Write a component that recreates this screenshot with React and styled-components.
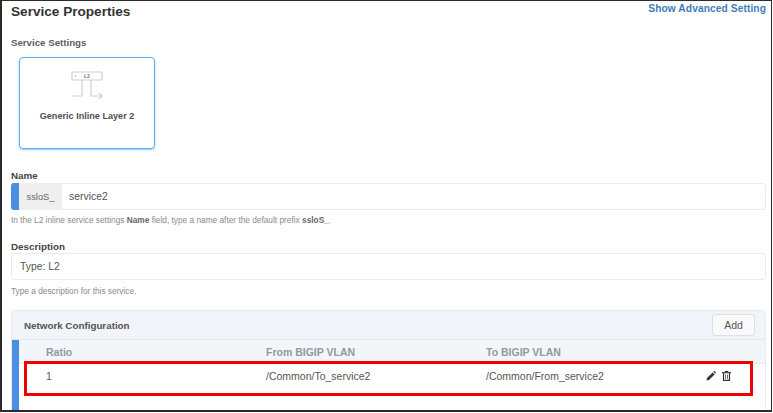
import React from "react";
import styled, { createGlobalStyle } from "styled-components";

const Global = createGlobalStyle`
  html, body { margin: 0; padding: 0; background: #fff; }
  body { font-family: "Liberation Sans", Arial, sans-serif; }
`;

const Frame = styled.div`
  box-sizing: border-box;
  width: 772px;
  height: 412px;
  border: 1px solid #2b2b2b;
  border-left-width: 2px;
  border-bottom-width: 2px;
  padding: 0 5px 0 9px;
  overflow: hidden;
  position: relative;
  background: #fff;
`;

const TitleRow = styled.div`
  display: flex;
  justify-content: space-between;
  align-items: flex-start;
  height: 35px;
`;

const Title = styled.h1`
  margin: 2px 0 0;
  font-size: 13.6px;
  line-height: 18px;
  font-weight: 700;
  color: #333;
`;

const AdvancedLink = styled.a`
  font-size: 10.2px;
  line-height: 14px;
  font-weight: 700;
  color: #3f7db8;
  letter-spacing: 0.1px;
  margin-top: 1px;
`;

const SectionLabel = styled.div`
  font-size: 9.7px;
  line-height: 14px;
  font-weight: 700;
  color: #5a5f66;
  margin-bottom: 7px;
`;

const Card = styled.div`
  box-sizing: border-box;
  width: 136px;
  height: 92px;
  margin-left: 8px;
  border: 1px solid #59b0f5;
  border-radius: 4px;
  box-shadow: 0 1px 2px rgba(60, 150, 230, 0.55);
  display: flex;
  flex-direction: column;
  align-items: center;
  padding-top: 13px;
`;

const CardName = styled.div`
  margin-top: 10px;
  font-size: 9.1px;
  line-height: 13px;
  font-weight: 700;
  color: #4f4f4f;
`;

const FieldLabel = styled.div`
  font-size: 9.8px;
  line-height: 13px;
  font-weight: 700;
  color: #444;
  margin-top: ${(p) => p.$top}px;
  margin-bottom: ${(p) => p.$bottom}px;
`;

const InputBox = styled.div`
  box-sizing: border-box;
  height: 27px;
  border: 1px solid #e9ecef;
  border-radius: 3px;
  display: flex;
  align-items: stretch;
  font-size: 10.4px;
  color: #555;
`;

const Prefix = styled.div`
  width: 51px;
  box-sizing: border-box;
  margin: -1px 0 -1px -1px;
  border-left: 8px solid #4a8fe3;
  border-radius: 3px 0 0 3px;
  background: #efefef;
  display: flex;
  align-items: center;
  justify-content: center;
  font-size: 9.3px;
  color: #666;
`;

const InputValue = styled.div`
  display: flex;
  align-items: center;
  padding-left: ${(p) => p.$pad}px;
`;

const Help = styled.div`
  font-size: 8.3px;
  line-height: 11px;
  color: #8a8a8a;
  margin-top: ${(p) => p.$top}px;
  b { font-weight: 700; color: #666; }
`;

const Panel = styled.section`
  box-sizing: border-box;
  margin-top: 13px;
  height: 110px;
  border: 1px solid #e8ebf0;
  border-radius: 3px 3px 0 0;
`;

const PanelHeader = styled.header`
  box-sizing: border-box;
  height: 29px;
  background: #f1f4f8;
  border-bottom: 1px solid #e6eaef;
  display: flex;
  align-items: center;
  justify-content: space-between;
  padding: 0 10px 0 12px;
`;

const PanelTitle = styled.div`
  font-size: 9.8px;
  font-weight: 700;
  color: #555;
`;

const AddButton = styled.button`
  box-sizing: border-box;
  width: 43px;
  height: 22px;
  padding: 0;
  background: #fafafa;
  border: 1px solid #dcdfe3;
  border-radius: 3px;
  font-family: inherit;
  font-size: 10.5px;
  color: #555;
`;

const PanelBody = styled.div`
  border-left: 7px solid #4a8fe3;
  height: 81px;
`;

const Grid = styled.div`
  display: grid;
  grid-template-columns: 220px 220px 1fr 59px;
  padding-left: 27px;
  align-items: center;
`;

const HeadRow = styled(Grid)`
  height: 23px;
  background: #f3f6f9;
  border-bottom: 1px solid #e8ebf0;
  font-size: 10.5px;
  font-weight: 700;
  color: #8d99a8;
`;

const BodyRow = styled(Grid)`
  height: 24px;
  font-size: 10.5px;
  color: #555;
`;

const Actions = styled.div`
  display: flex;
  gap: 6px;
  align-items: center;
`;

const Highlight = styled.div`
  position: absolute;
  box-sizing: border-box;
  left: 22px;
  top: 360px;
  width: 729px;
  height: 35px;
  border: 3px solid #f00000;
  pointer-events: none;
`;

const Stencil = () => (
  <svg width="32" height="29" viewBox="0 0 32 29" fill="none" stroke="#cfcfcf" strokeWidth="1.2">
    <rect x="1" y="1" width="30" height="8" rx="0.5" />
    <circle cx="4.5" cy="5" r="0.8" fill="#aaa" stroke="none" />
    <text x="13" y="7" fontSize="5" fontWeight="700" fill="#777" stroke="none" fontFamily="Liberation Sans">L2</text>
    <path d="M11 9v16H1" />
    <path d="M20 9v16h11M28 22l3 3-3 3" />
  </svg>
);

const Pencil = () => (
  <svg width="10" height="10" viewBox="0 0 10 10" fill="#333">
    <path d="M0.5 9.5 L1 7 L6.6 1.4 L8.6 3.4 L3 9 Z" />
    <path d="M7.2 0.8 L8 0.2 Q8.4 0 8.8 0.3 L9.7 1.2 Q10 1.6 9.7 2 L9.2 2.8 Z" />
  </svg>
);

const Trash = () => (
  <svg width="9" height="10" viewBox="0 0 9 10" fill="none" stroke="#333">
    <path d="M0 1.7h9" strokeWidth="1.1" />
    <path d="M3 1.5V.5h3v1" strokeWidth="1" />
    <path d="M1.5 2v7.4h6V2" strokeWidth="1.2" />
    <path d="M3.5 3.5v4.5M5.5 3.5v4.5" strokeWidth="0.7" />
  </svg>
);

export default function App() {
  return (
    <>
      <Global />
      <Frame>
        <TitleRow>
          <Title>Service Properties</Title>
          <AdvancedLink>Show Advanced Setting</AdvancedLink>
        </TitleRow>
        <SectionLabel>Service Settings</SectionLabel>
        <Card>
          <Stencil />
          <CardName>Generic Inline Layer 2</CardName>
        </Card>
        <FieldLabel $top={20} $bottom={1}>Name</FieldLabel>
        <InputBox>
          <Prefix>ssloS_</Prefix>
          <InputValue $pad={7}>service2</InputValue>
        </InputBox>
        <Help $top={5}>
          In the L2 inline service settings <b>Name</b> field, type a name after the default prefix <b>ssloS_</b>.
        </Help>
        <FieldLabel $top={14} $bottom={0}>Description</FieldLabel>
        <InputBox>
          <InputValue $pad={8}>Type: L2</InputValue>
        </InputBox>
        <Help $top={6}>Type a description for this service.</Help>
        <Panel>
          <PanelHeader>
            <PanelTitle>Network Configuration</PanelTitle>
            <AddButton>Add</AddButton>
          </PanelHeader>
          <PanelBody>
            <HeadRow>
              <div>Ratio</div>
              <div>From BIGIP VLAN</div>
              <div>To BIGIP VLAN</div>
              <div />
            </HeadRow>
            <BodyRow>
              <div>1</div>
              <div>/Common/To_service2</div>
              <div>/Common/From_service2</div>
              <Actions>
                <Pencil />
                <Trash />
              </Actions>
            </BodyRow>
          </PanelBody>
        </Panel>
        <Highlight />
      </Frame>
    </>
  );
}
